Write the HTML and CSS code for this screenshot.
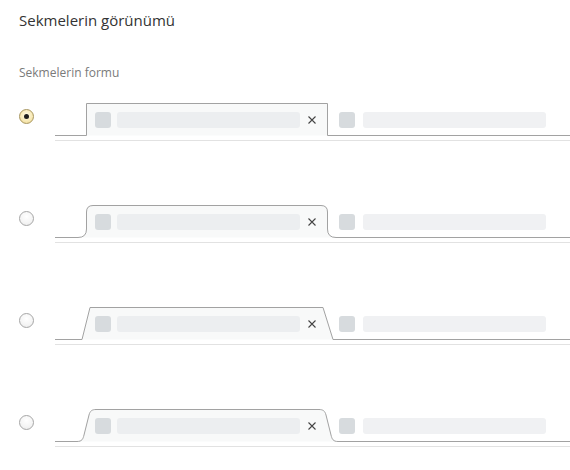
FILE: index.html
```html
<!DOCTYPE html>
<html lang="tr">
<head>
<meta charset="utf-8">
<title>Sekmelerin görünümü</title>
<link rel="stylesheet" href="styles.css">
</head>
<body>
<main class="page">
  <h1 class="title">Sekmelerin görünümü</h1>
  <h2 class="subtitle">Sekmelerin formu</h2>
  <div class="options">
    <label class="option">
      <span class="radio checked"></span>
      <svg class="preview" width="515" height="42" viewBox="0 0 515 42">
        <path class="tab-fill" d="M31.5 35.5 V3.5 H272.5 V35.5 Z"/>
        <path class="outline" d="M0 35.5 H31.5 V3.5 H272.5 V35.5 H515"/>
        <path class="under" d="M0 40.5 H515"/>
        <rect class="fav" x="40" y="12" width="16" height="16" rx="3"/>
        <rect class="bar" x="62" y="12" width="183" height="16" rx="3"/>
        <path class="close" d="M253.5 16.5 L260.5 23.5 M260.5 16.5 L253.5 23.5"/>
        <rect class="fav" x="284" y="12" width="16" height="16" rx="3"/>
        <rect class="bar2" x="308" y="12" width="183" height="16" rx="3"/>
      </svg>
    </label>
    <label class="option">
      <span class="radio"></span>
      <svg class="preview" width="515" height="42" viewBox="0 0 515 42">
        <path class="tab-fill" d="M23 35.5 Q31.5 35.5 31.5 27 V10 Q31.5 3.5 38 3.5 H266 Q272.5 3.5 272.5 10 V27 Q272.5 35.5 281 35.5 Z"/>
        <path class="outline" d="M0 35.5 H23 Q31.5 35.5 31.5 27 V10 Q31.5 3.5 38 3.5 H266 Q272.5 3.5 272.5 10 V27 Q272.5 35.5 281 35.5 H515"/>
        <path class="under" d="M0 40.5 H515"/>
        <rect class="fav" x="40" y="12" width="16" height="16" rx="3"/>
        <rect class="bar" x="62" y="12" width="183" height="16" rx="3"/>
        <path class="close" d="M253.5 16.5 L260.5 23.5 M260.5 16.5 L253.5 23.5"/>
        <rect class="fav" x="284" y="12" width="16" height="16" rx="3"/>
        <rect class="bar2" x="308" y="12" width="183" height="16" rx="3"/>
      </svg>
    </label>
    <label class="option">
      <span class="radio"></span>
      <svg class="preview" width="515" height="42" viewBox="0 0 515 42">
        <path class="tab-fill" d="M27 35.5 L35 3.5 H268 L278 35.5 Z"/>
        <path class="outline" d="M0 35.5 H27 L35 3.5 H268 L278 35.5 H515"/>
        <path class="under" d="M0 40.5 H515"/>
        <rect class="fav" x="40" y="12" width="16" height="16" rx="3"/>
        <rect class="bar" x="62" y="12" width="183" height="16" rx="3"/>
        <path class="close" d="M253.5 16.5 L260.5 23.5 M260.5 16.5 L253.5 23.5"/>
        <rect class="fav" x="284" y="12" width="16" height="16" rx="3"/>
        <rect class="bar2" x="308" y="12" width="183" height="16" rx="3"/>
      </svg>
    </label>
    <label class="option">
      <span class="radio"></span>
      <svg class="preview" width="515" height="42" viewBox="0 0 515 42">
        <path class="tab-fill" d="M22 35.5 C27 35.5 28 33 29 29 L34 9 C35 5 37 3.5 41 3.5 H264 C268 3.5 270 5 271 9 L276 29 C277 33 278 35.5 283 35.5 Z"/>
        <path class="outline" d="M0 35.5 H22 C27 35.5 28 33 29 29 L34 9 C35 5 37 3.5 41 3.5 H264 C268 3.5 270 5 271 9 L276 29 C277 33 278 35.5 283 35.5 H515"/>
        <path class="under" d="M0 40.5 H515"/>
        <rect class="fav" x="40" y="12" width="16" height="16" rx="3"/>
        <rect class="bar" x="62" y="12" width="183" height="16" rx="3"/>
        <path class="close" d="M253.5 16.5 L260.5 23.5 M260.5 16.5 L253.5 23.5"/>
        <rect class="fav" x="284" y="12" width="16" height="16" rx="3"/>
        <rect class="bar2" x="308" y="12" width="183" height="16" rx="3"/>
      </svg>
    </label>
  </div>
</main>
</body>
</html>
```
FILE: styles.css
```css
html, body {
  margin: 0;
  padding: 0;
  background: #ffffff;
}

body {
  font-family: "Open Sans", "Noto Sans", "Liberation Sans", sans-serif;
  color: #333333;
}

.page {
  padding: 9px 0 0 19px;
}

.title {
  margin: 0;
  font-size: 15px;
  font-weight: 400;
  line-height: 22px;
  color: #333333;
}

.subtitle {
  margin: 33px 0 0 0;
  font-size: 12px;
  font-weight: 400;
  line-height: 18px;
  color: #7a7a7a;
}

.options {
  display: flex;
  flex-direction: column;
  gap: 60px;
  margin-top: 18px;
}

.option {
  display: flex;
  align-items: flex-start;
  gap: 21px;
}

.radio {
  box-sizing: border-box;
  width: 15px;
  height: 15px;
  margin-top: 9px;
  border-radius: 50%;
  border: 1px solid #a6a6a6;
  background: radial-gradient(circle at 50% 35%, #ffffff 0%, #f4f4f4 60%, #e6e6e6 100%);
  display: flex;
  align-items: center;
  justify-content: center;
  flex-shrink: 0;
}

.radio.checked {
  border-color: #a8965f;
  background: radial-gradient(circle at 50% 40%, #fffbe6 0%, #f8eab8 55%, #ecd48a 100%);
}

.radio.checked::after {
  content: "";
  width: 5px;
  height: 5px;
  border-radius: 50%;
  background: #1e1e1e;
}

.preview {
  display: block;
  flex-shrink: 0;
}

.tab-fill {
  fill: #f8f9f9;
  stroke: none;
}

.outline {
  fill: none;
  stroke: #a2a2a2;
  stroke-width: 1;
}

.under {
  fill: none;
  stroke: #e2e2e2;
  stroke-width: 1;
}

.fav {
  fill: #d7dbde;
}

.bar {
  fill: #eceef0;
}

.bar2 {
  fill: #f0f1f3;
}

.close {
  fill: none;
  stroke: #444444;
  stroke-width: 1.1;
}
```
